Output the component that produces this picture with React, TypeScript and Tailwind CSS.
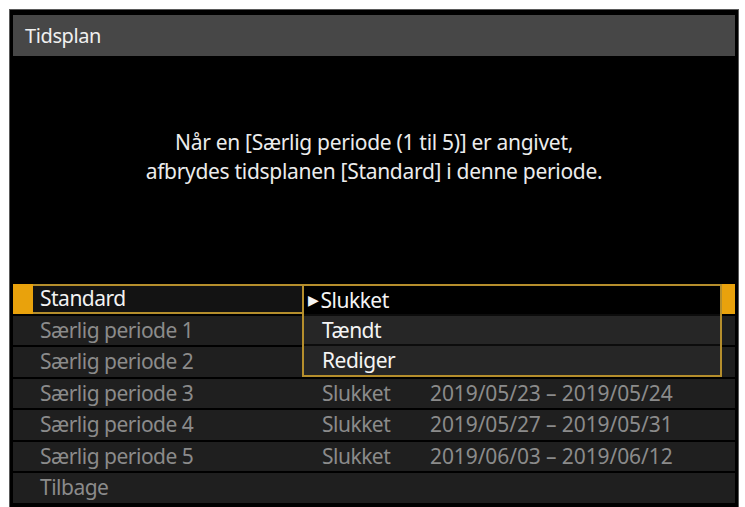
import React from 'react'

const font = { fontFamily: '"Noto Sans", "Open Sans", sans-serif' }

type Row = { label: string; state?: string; range?: string }

const rows: Row[] = [
  { label: 'Særlig periode 1' },
  { label: 'Særlig periode 2' },
  { label: 'Særlig periode 3', state: 'Slukket', range: '2019/05/23 – 2019/05/24' },
  { label: 'Særlig periode 4', state: 'Slukket', range: '2019/05/27 – 2019/05/31' },
  { label: 'Særlig periode 5', state: 'Slukket', range: '2019/06/03 – 2019/06/12' },
  { label: 'Tilbage' },
]

export default function App() {
  return (
    <div className="w-[745px] h-[507px] bg-white pl-[9px] pt-[9px] pr-[6px] overflow-hidden" style={font}>
      <div className="h-full bg-black border-l border-t border-r border-[#5a5a5a] px-[3px] pt-[5px] flex flex-col">
        {/* Title bar */}
        <div className="h-[41px] shrink-0 bg-[#474747] flex items-center pl-[12px] text-[#f0f0f0] text-[20px] tracking-[-0.4px]">
          Tidsplan
        </div>

        {/* Message */}
        <div className="h-[228px] shrink-0 pt-[72px] text-center text-[#ececec] text-[21px] leading-[29px] tracking-[-0.3px]">
          <p>Når en [Særlig periode (1 til 5)] er angivet,</p>
          <p>afbrydes tidsplanen [Standard] i denne periode.</p>
        </div>

        {/* Menu rows */}
        <div className="relative flex flex-col gap-[2px] text-[21px] leading-none tracking-[-0.5px]">
          {/* Standard (selected) */}
          <div className="h-[29.5px] flex items-stretch bg-[#131313]">
            <div className="w-[20px] bg-[#e9a20c]" />
            <div className="flex-1 flex items-center pl-[7px] text-[#f2f2f2] border-t-2 border-b-2 border-[#b58e2c]">
              Standard
            </div>
            <div className="w-[15px] bg-[#e9a20c]" />
          </div>

          {rows.map((r) => (
            <div key={r.label} className="h-[29.5px] flex items-center bg-[#1f1f1f] text-[#8b8b8b]">
              <span className="w-[309px] pl-[27px] shrink-0">{r.label}</span>
              {r.state && <span className="w-[108px] shrink-0">{r.state}</span>}
              {r.range && <span className="tracking-[-0.1px]">{r.range}</span>}
            </div>
          ))}

          {/* Dropdown */}
          <div className="absolute left-[289px] top-0 w-[420px] h-[93px] border-2 border-[#b58e2c] bg-[#0c0c0c] flex flex-col gap-[2px] text-[#f4f4f4] overflow-hidden">
            <div className="h-[28px] shrink-0 bg-black flex items-center pl-[4px]">
              <span className="text-[14px] mr-[2px]">▶</span>
              Slukket
            </div>
            <div className="h-[28px] shrink-0 bg-[#262626] flex items-center pl-[18px]">Tændt</div>
            <div className="h-[29px] shrink-0 bg-[#262626] flex items-center pl-[18px]">Rediger</div>
          </div>
        </div>
      </div>
    </div>
  )
}
